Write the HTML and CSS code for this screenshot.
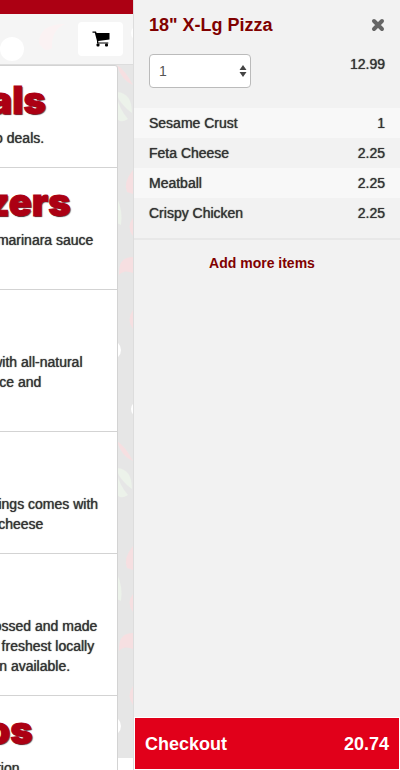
FILE: index.html
```html
<!DOCTYPE html>
<html lang="en">
  <head>
    <meta charset="UTF-8">
    <meta name="viewport" content="width=device-width, initial-scale=1">
    <title>Pizza Menu</title>
    <link rel="stylesheet" href="styles.css">
  </head>
  <body>
    <!-- menu page, pushed left while the cart is open -->
    <div class="page">
      <div class="topbar"></div>
      <header class="header">
        <button type="button" class="btn-cart" aria-label="Cart">
          <svg width="18" height="16" viewBox="0 0 18 16">
            <path d="M0.5 0.5H4L4.6 2H17.5V8.6L6.3 10V11.4H16.3V12.6H5V10L2.8 1.8H0.5Z"/>
            <rect x="4.5" y="12.5" width="3" height="3" rx="1"/>
            <rect x="13" y="12.5" width="3" height="3" rx="1"/>
          </svg>
        </button>
      </header>
      <main class="menu">
        <section class="category">
          <h2>Big Daily Deals</h2>
          <p>Check out our super affordable combo deals.</p>
        </section>
        <section class="category">
          <h2>Best Appetizers</h2>
          <p>Served with a side of our homemade marinara sauce<br>or ranch dressing.</p>
        </section>
        <section class="category">
          <h2>Pizzas</h2>
          <p>Our pizzas are prepared in the oven with all-natural<br>mozzarella cheese, sweet tomato sauce and<br>your favorite toppings.</p>
        </section>
        <section class="category">
          <h2>Wings</h2>
          <p>Each order of our boneless chicken wings comes with<br>celery, carrots and cool ranch or blue cheese</p>
        </section>
        <section class="category">
          <h2>Salads</h2>
          <p>Our pizza dough is deliciously hand-tossed and made<br>every single day using only the finest, freshest locally<br>grown produce, meats and herbs when available.</p>
        </section>
        <section class="category">
          <h2>Noon Combos</h2>
          <p>Our subs are made fresh with a selection<br>of toppings.</p>
        </section>
      </main>
    </div>

    <aside class="cart">
      <div class="cart-title">
        <h3>18" X-Lg Pizza</h3>
        <button type="button" class="btn-remove" aria-label="Remove">
          <svg width="14" height="14" viewBox="0 0 14 14">
            <path d="M3 3L11 11M11 3L3 11"/>
          </svg>
        </button>
      </div>
      <div class="cart-qty">
        <div class="select">
          <select aria-label="Quantity">
            <option>1</option>
            <option>2</option>
            <option>3</option>
          </select>
          <svg class="arrows" width="8" height="14" viewBox="0 0 8 14">
            <path d="M4 1L7.5 6H0.5ZM4 13L0.5 8H7.5Z"/>
          </svg>
        </div>
        <span>12.99</span>
      </div>
      <table class="toppings">
        <tbody>
          <tr><td>Sesame Crust</td><td>1</td></tr>
          <tr><td>Feta Cheese</td><td>2.25</td></tr>
          <tr><td>Meatball</td><td>2.25</td></tr>
          <tr><td>Crispy Chicken</td><td>2.25</td></tr>
        </tbody>
      </table>
      <div class="add-more">
        <a href="#">Add more items</a>
      </div>
      <button type="button" class="checkout">
        <span>Checkout</span>
        <span>20.74</span>
      </button>
    </aside>
  </body>
</html>
```

FILE: styles.css
```css
* {
  box-sizing: border-box;
}
body {
  display: flex;
  height: 100vh;
  margin: 0;
  overflow: hidden;
  font-family: "Liberation Sans", Arial, Helvetica, sans-serif;
  font-size: 14px;
  line-height: 20px;
  color: #333;
  text-shadow: 0 0 1px #333;
}
h2, h3, p {
  margin: 0;
}
button {
  border: 0;
  padding: 0;
  font: inherit;
  cursor: pointer;
}

/* menu page */
.page {
  flex: 0 0 100%;
  margin-left: -267px;
  overflow: hidden;
  background-color: #e6e6e6;
  background-image:
    linear-gradient(#fff, #fff),
    url("data:image/svg+xml,%3Csvg xmlns='http://www.w3.org/2000/svg' width='400' height='376'%3E%3Cg fill='%23fff'%3E%3Ccircle cx='279' cy='49' r='12'/%3E%3Ccircle cx='378' cy='350' r='10'/%3E%3Ccircle cx='406' cy='33' r='8'/%3E%3C/g%3E%3Cg fill='%23f6dfe1'%3E%3Cpath d='M306 43Q306 24 332 24Q318 30 319 48Q312 54 306 43ZM384 65Q392 70 400 85Q388 80 384 65ZM400 170Q390 182 394 192L400 194ZM400 218Q393 227 400 236ZM386 272Q386 257 400 257V273Q391 269 386 275ZM400 310Q393 320 400 329Z'/%3E%3C/g%3E%3Cpath fill='%23ecf2ea' d='M384 92Q399 93 399 113Q387 104 384 95ZM384 98Q387 110 395 119Q387 124 384 118ZM384 198Q390 210 388 225L384 223Z'/%3E%3C/svg%3E");
  background-position: left bottom, left top;
  background-size: 100% 12px, 400px 376px;
  background-repeat: no-repeat, repeat;
}
.topbar {
  height: 14px;
  background: #ac0013;
}
.header {
  display: flex;
  justify-content: flex-end;
  padding: 8px 10px;
  border-bottom: 1px solid #ddd;
  background: rgba(255, 255, 255, 0.6);
}
.btn-cart {
  display: flex;
  align-items: center;
  justify-content: center;
  width: 45px;
  height: 34px;
  border-radius: 4px;
  background: #fff;
}
.menu {
  margin: 0 15px;
  border: 1px solid #d3d3d3;
  border-radius: 3px;
  background: #fff;
}
.category {
  padding: 12px 16px 19px;
  border-bottom: 1px solid #d3d3d3;
  white-space: nowrap;
}
.category h2 {
  margin-bottom: 6px;
  font-family: Inter, "Open Sans", sans-serif;
  font-size: 38px;
  font-weight: 900;
  line-height: 44px;
  color: #ac0013;
  -webkit-text-stroke: 1px #ac0013;
  text-shadow: 1px 1px 1px #333;
}

/* cart drawer */
.cart {
  display: flex;
  flex: 0 0 267px;
  flex-direction: column;
  border-left: 1px solid #ddd;
  background: #f2f2f2;
}
.cart-title,
.cart-qty {
  display: flex;
  justify-content: space-between;
  padding: 0 15px;
}
.cart-title {
  align-items: center;
  padding-top: 13px;
}
.cart-title h3 {
  font-size: 18px;
  line-height: 24px;
  color: #800000;
  text-shadow: none;
}
.btn-remove {
  display: flex;
  background: none;
}
.btn-remove svg {
  fill: none;
  stroke: #666;
  stroke-width: 4;
  stroke-linecap: round;
}
.cart-qty {
  padding-top: 17px;
  padding-bottom: 20px;
}
.select {
  position: relative;
  width: 102px;
}
.select select {
  display: block;
  width: 100%;
  height: 34px;
  padding: 0 9px;
  border: 1px solid #bbb;
  border-radius: 4px;
  background: #fff;
  font: inherit;
  color: #555;
  text-shadow: none;
  appearance: none;
}
.arrows {
  position: absolute;
  top: 10px;
  right: 4px;
  fill: #444;
  pointer-events: none;
}
.toppings {
  width: 100%;
  border-collapse: collapse;
}
.toppings td {
  padding: 5px 15px;
}
.toppings td:last-child {
  text-align: right;
}
.toppings tr:nth-child(odd) {
  background: #f8f8f8;
}
.add-more {
  margin-top: 10px;
  padding: 13px 10px 13px 0;
  border-top: 2px solid #e8e8e8;
  text-align: center;
}
.add-more a {
  font-weight: bold;
  color: #800000;
  text-decoration: none;
  text-shadow: none;
}
.checkout {
  display: flex;
  align-items: center;
  justify-content: space-between;
  height: 53px;
  margin-top: auto;
  padding: 0 10px;
  border: 1px solid #fff;
  background: #e1001a;
  font-size: 18px;
  font-weight: bold;
  color: #fff;
  text-shadow: none;
}
```
